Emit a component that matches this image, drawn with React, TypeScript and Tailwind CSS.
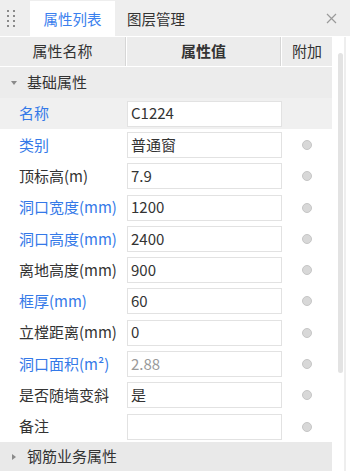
import React from 'react';

type Row = { name: string; value: string; blue?: boolean; muted?: boolean; hover?: boolean; dot?: boolean };

const rows: Row[] = [
  { name: '名称', value: 'C1224', blue: true, hover: true, dot: false },
  { name: '类别', value: '普通窗', blue: true, dot: true },
  { name: '顶标高(m)', value: '7.9', dot: true },
  { name: '洞口宽度(mm)', value: '1200', blue: true, dot: true },
  { name: '洞口高度(mm)', value: '2400', blue: true, dot: true },
  { name: '离地高度(mm)', value: '900', dot: true },
  { name: '框厚(mm)', value: '60', blue: true, dot: true },
  { name: '立樘距离(mm)', value: '0', dot: true },
  { name: '洞口面积(m²)', value: '2.88', blue: true, muted: true, dot: true },
  { name: '是否随墙变斜', value: '是', dot: true },
  { name: '备注', value: '', dot: true },
];

const font = { fontFamily: '"Noto Sans CJK SC", "Noto Sans", sans-serif' };

const Grip = () => (
  <div className="grid grid-cols-2 gap-x-[4px] gap-y-[3px] w-[8px] ml-[7px]">
    {Array.from({ length: 8 }).map((_, i) => (
      <span key={i} className="w-[2px] h-[2px] bg-[#8a8a8a]" />
    ))}
  </div>
);

const PropRow = ({ row }: { row: Row }) => (
  <div className={`flex items-center h-[31.3px] ${row.hover ? 'bg-[#f0f0f0]' : 'bg-white'}`}>
    <div className={`w-[127px] pl-[19px] text-[15px] whitespace-nowrap ${row.blue ? 'text-[#3479e8]' : 'text-[#333333]'}`}>
      {row.name}
    </div>
    <div className="w-[155px] h-[26px] border border-[#e2e2e2] bg-white flex items-center pl-[3px]">
      <span className={`text-[15px] ${row.muted ? 'text-[#9a9a9a]' : 'text-[#333333]'}`}>{row.value}</span>
    </div>
    <div className="flex-1 flex justify-center">
      {row.dot && <span className="w-[10px] h-[10px] rounded-full bg-[#d8d8d8] border border-[#c6c6c6]" />}
    </div>
  </div>
);

export default function App() {
  return (
    <div className="w-[350px] h-[471px] overflow-hidden bg-white flex flex-col" style={font}>
      <div className="h-[37px] bg-[#eeeeee] flex items-end border-b border-white">
        <div className="h-[36px] flex items-center w-[30px]">
          <Grip />
        </div>
        <div className="h-[35px] w-[85px] bg-white flex items-center justify-center text-[14.5px] text-[#3a80ee]">
          属性列表
        </div>
        <div className="h-[35px] px-[12px] flex items-center text-[14.5px] text-[#333333]">图层管理</div>
        <div className="flex-1" />
        <div className="h-[35px] w-[38px] flex items-center justify-center">
          <svg width="11" height="11" viewBox="0 0 11 11">
            <path d="M1 1 L10 10 M10 1 L1 10" stroke="#9a9a9a" strokeWidth="1.2" />
          </svg>
        </div>
      </div>
      <div className="flex flex-1 min-h-0">
        <div className="w-[332px] flex flex-col">
          <div className="h-[30px] bg-[#ececec] flex text-[15px] text-[#333333] border-b border-white">
            <div className="w-[126px] flex items-center justify-center border-r border-[#d6d6d6]">属性名称</div>
            <div className="w-[155px] flex items-center justify-center font-bold border-l border-white border-r border-r-[#d6d6d6]">属性值</div>
            <div className="flex-1 flex items-center justify-center border-l border-white">附加</div>
          </div>
          <div className="h-[31px] bg-[#ececec] flex items-center text-[15px] text-[#333333]">
            <svg width="8" height="6" viewBox="0 0 8 6" className="ml-[10px] mr-[9px]">
              <path d="M1 1 L7 1 L4 5 Z" fill="#8a8a8a" />
            </svg>
            基础属性
          </div>
          {rows.map((r) => (
            <PropRow key={r.name} row={r} />
          ))}
          <div className="flex-1 bg-[#e9e9e9] flex items-center text-[15px] text-[#333333]">
            <svg width="6" height="8" viewBox="0 0 6 8" className="ml-[11px] mr-[10px]">
              <path d="M1 1 L5 4 L1 7 Z" fill="#8a8a8a" />
            </svg>
            钢筋业务属性
          </div>
        </div>
        <div className="flex-1 flex bg-white">
          <div className="w-[6px]" />
          <div className="w-[5px] pt-[16px]">
            <div className="w-[5px] h-[320px] rounded-full bg-[#e3e3e3]" />
          </div>
          <div className="w-[1px]" />
          <div className="w-[2px] bg-[#eeeeee]" />
        </div>
      </div>
    </div>
  );
}
